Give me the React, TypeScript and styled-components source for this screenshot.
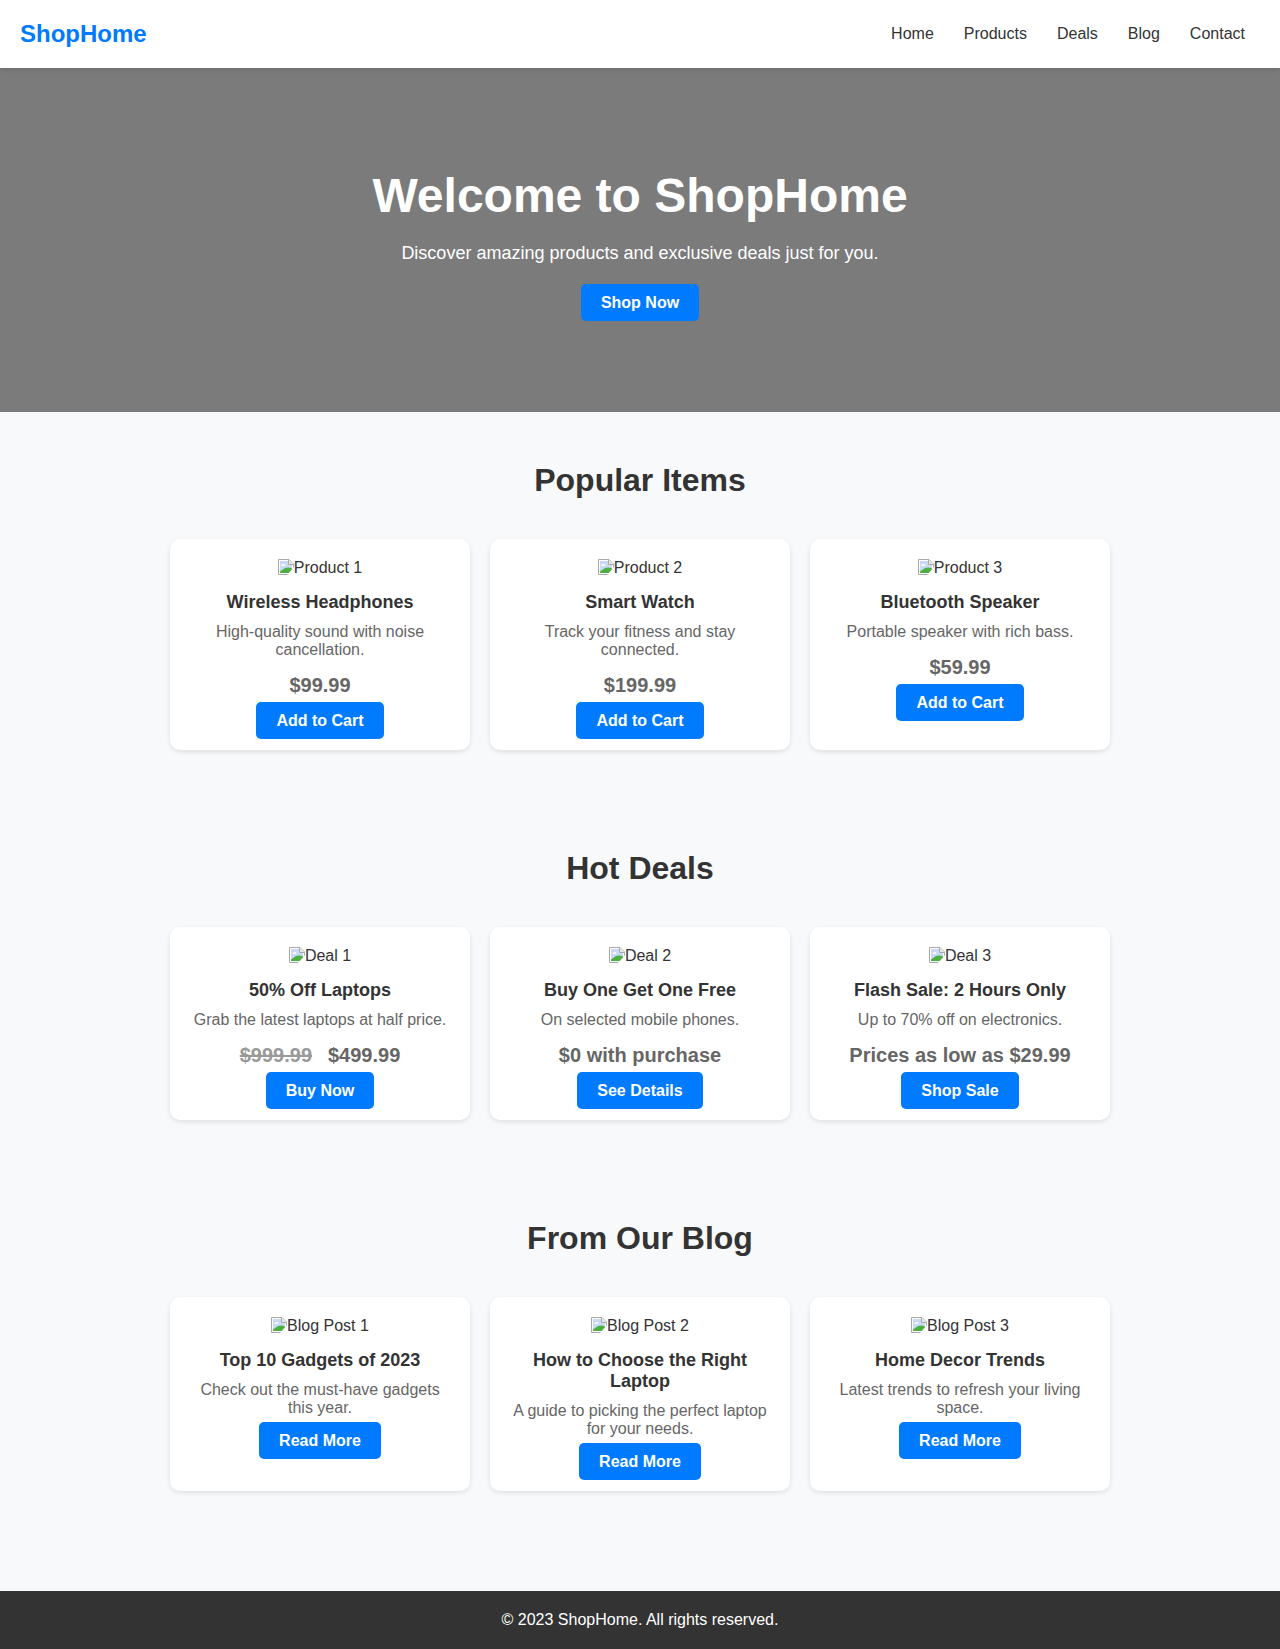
import styled, { createGlobalStyle } from 'styled-components';

const GlobalStyle = createGlobalStyle`
  * {
    box-sizing: border-box;
  }
  body {
    margin: 0;
    font-family: 'Liberation Sans', Arial, sans-serif;
    background: #f8f9fa;
    color: #333;
  }
`;

type CardData = {
  alt: string;
  title: string;
  text: string;
  cta: string;
  price?: string;
  oldPrice?: string;
};

const popular: CardData[] = [
  { alt: 'Product 1', title: 'Wireless Headphones', text: 'High-quality sound with noise cancellation.', price: '$99.99', cta: 'Add to Cart' },
  { alt: 'Product 2', title: 'Smart Watch', text: 'Track your fitness and stay connected.', price: '$199.99', cta: 'Add to Cart' },
  { alt: 'Product 3', title: 'Bluetooth Speaker', text: 'Portable speaker with rich bass.', price: '$59.99', cta: 'Add to Cart' },
];

const deals: CardData[] = [
  { alt: 'Deal 1', title: '50% Off Laptops', text: 'Grab the latest laptops at half price.', oldPrice: '$999.99', price: '$499.99', cta: 'Buy Now' },
  { alt: 'Deal 2', title: 'Buy One Get One Free', text: 'On selected mobile phones.', price: '$0 with purchase', cta: 'See Details' },
  { alt: 'Deal 3', title: 'Flash Sale: 2 Hours Only', text: 'Up to 70% off on electronics.', price: 'Prices as low as $29.99', cta: 'Shop Sale' },
];

const posts: CardData[] = [
  { alt: 'Blog Post 1', title: 'Top 10 Gadgets of 2023', text: 'Check out the must-have gadgets this year.', cta: 'Read More' },
  { alt: 'Blog Post 2', title: 'How to Choose the Right Laptop', text: 'A guide to picking the perfect laptop for your needs.', cta: 'Read More' },
  { alt: 'Blog Post 3', title: 'Home Decor Trends', text: 'Latest trends to refresh your living space.', cta: 'Read More' },
];

const links = ['Home', 'Products', 'Deals', 'Blog', 'Contact'];

// the browser's missing-image glyph
const BrokenImage = () => (
  <ImageIcon viewBox="0 0 16 16" width={16} height={16}>
    <path d="M0.5 0.5H11L15.5 5V15.5H0.5Z" fill="#fff" stroke="#a9a9a9" />
    <path d="M2 2H10.5V5.5H14V14H2Z" fill="#c9daf6" />
    <path d="M3 6.5C4.5 4.5 6.5 4.5 8 6.5C6 7 4.5 7 3 6.5Z" fill="#fff" />
    <path d="M2 14V12.5L7 9C9.5 8 12 8.5 14 9.5V14Z" fill="#4caf3f" />
    <path d="M10.5 0.5V5.5H15.5" fill="#e8e8e8" stroke="#a9a9a9" />
    <path d="M16 8L9 16H16Z" fill="#fff" />
  </ImageIcon>
);

const Card = ({ item }: { item: CardData }) => (
  <CardBox>
    <Thumb>
      <BrokenImage />
      {item.alt}
    </Thumb>
    <CardTitle>{item.title}</CardTitle>
    <CardText>{item.text}</CardText>
    {item.price && (
      <Price>
        {item.oldPrice && <OldPrice>{item.oldPrice}</OldPrice>}
        {item.price}
      </Price>
    )}
    <Button>{item.cta}</Button>
  </CardBox>
);

const Section = ({ title, items }: { title: string; items: CardData[] }) => (
  <SectionBox>
    <SectionTitle>{title}</SectionTitle>
    <Grid>
      {items.map((item) => (
        <Card key={item.alt} item={item} />
      ))}
    </Grid>
  </SectionBox>
);

const App = () => {
  return (
    <>
      <GlobalStyle />
      <Header>
        <Logo>ShopHome</Logo>
        <Nav>
          {links.map((link) => (
            <NavLink key={link} href="#">
              {link}
            </NavLink>
          ))}
        </Nav>
      </Header>
      <Hero>
        <HeroTitle>Welcome to ShopHome</HeroTitle>
        <HeroText>Discover amazing products and exclusive deals just for you.</HeroText>
        <Button>Shop Now</Button>
      </Hero>
      <Main>
        <Section title="Popular Items" items={popular} />
        <Section title="Hot Deals" items={deals} />
        <Section title="From Our Blog" items={posts} />
      </Main>
      <Footer>© 2023 ShopHome. All rights reserved.</Footer>
    </>
  );
};

export default App;

const Header = styled.header`
  position: relative;
  z-index: 1;
  height: 68px;
  display: flex;
  align-items: center;
  justify-content: space-between;
  padding: 0 20px;
  background: #fff;
  box-shadow: 0 2px 5px rgba(0, 0, 0, 0.1);
`;
const Logo = styled.div`
  font-size: 24px;
  font-weight: bold;
  color: #007bff;
`;
const Nav = styled.nav`
  display: flex;
`;
const NavLink = styled.a`
  padding: 0 15px;
  font-size: 16px;
  color: #333;
  text-decoration: none;
`;
const Hero = styled.section`
  height: 344px;
  display: flex;
  flex-direction: column;
  align-items: center;
  padding: 100px 20px 0;
  background: #7b7b7b;
  color: #fff;
  text-align: center;
`;
const HeroTitle = styled.h1`
  margin: 0 0 20px;
  font-size: 48px;
`;
const HeroText = styled.p`
  margin: 0 0 20px;
  font-size: 18px;
`;
const Button = styled.button`
  padding: 10px 20px;
  border: none;
  border-radius: 5px;
  background: #007bff;
  color: #fff;
  font-family: inherit;
  font-size: 16px;
  font-weight: bold;
  line-height: 17px;
`;
const Main = styled.main`
  padding-bottom: 50px;
`;
const SectionBox = styled.section`
  max-width: 980px;
  margin: 0 auto;
  padding: 50px 20px;
`;
const SectionTitle = styled.h2`
  margin: 0 0 40px;
  font-size: 32px;
  text-align: center;
`;
const Grid = styled.div`
  display: grid;
  grid-template-columns: repeat(3, 300px);
  gap: 20px;
`;
const CardBox = styled.article`
  padding: 20px 20px 11px;
  background: #fff;
  border-radius: 10px;
  box-shadow: 0 2px 5px rgba(0, 0, 0, 0.1);
  text-align: center;
`;
const Thumb = styled.div`
  font-size: 16px;
`;
const ImageIcon = styled.svg`
  vertical-align: -2px;
`;
const CardTitle = styled.h3`
  margin: 15px 0 10px;
  font-size: 18px;
`;
const CardText = styled.p`
  margin: 0 0 5px;
  font-size: 16px;
  color: #666;
`;
const Price = styled.div`
  margin: 15px 0 5px;
  font-size: 20px;
  font-weight: bold;
  color: #666;
`;
const OldPrice = styled.span`
  margin-right: 16px;
  color: #999;
  text-decoration: line-through;
`;
const Footer = styled.footer`
  padding: 20px;
  background: #333;
  color: #fff;
  font-size: 16px;
  text-align: center;
`;
